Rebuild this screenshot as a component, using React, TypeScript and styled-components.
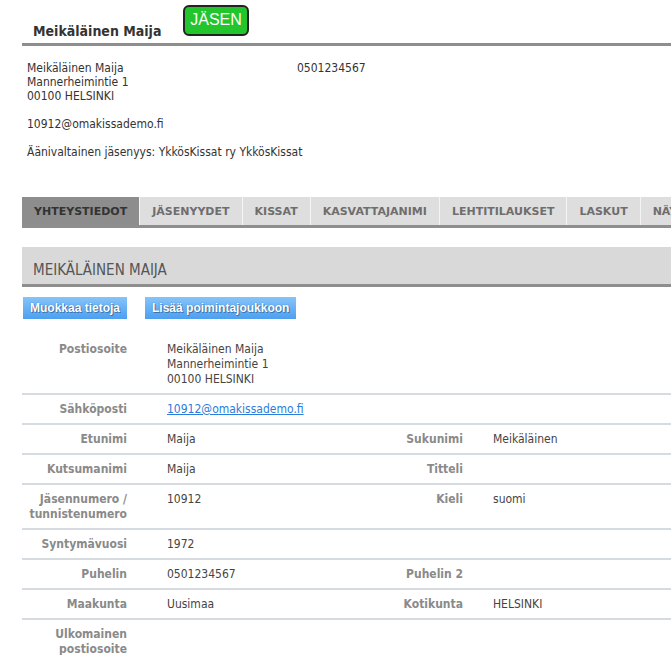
import React from "react";
import styled, { createGlobalStyle } from "styled-components";

const GlobalStyle = createGlobalStyle`
  html, body { margin: 0; padding: 0; background: #ffffff; }
  body {
    font-family: "DejaVu Sans Condensed", "DejaVu Sans", sans-serif;
    font-size: 12px;
    color: #333333;
    overflow: hidden;
  }
`;

const Page = styled.div`
  padding-left: 22px;
  width: 720px;
`;

const Header = styled.div`
  display: flex;
  align-items: flex-start;
  height: 38px;
  padding-top: 5px;
  border-bottom: 3px solid #8e8e8e;
`;

const Title = styled.h1`
  flex: 0 0 161px;
  margin: 0;
  padding: 18px 0 0 11px;
  box-sizing: border-box;
  font-size: 14px;
  font-weight: bold;
  color: #333;
  line-height: 16px;
`;

const Badge = styled.span`
  display: inline-flex;
  align-items: center;
  justify-content: center;
  width: 66px;
  height: 31px;
  box-sizing: border-box;
  padding-bottom: 2px;
  border: 2px solid #222;
  border-radius: 6px;
  background: #22c52b;
  color: #ffffff;
  font-family: "Liberation Sans", Arial, sans-serif;
  font-size: 16px;
`;

const Contact = styled.div`
  margin: 15px 0 0 5px;
  line-height: 14px;
`;

const AddressRow = styled.div`
  display: flex;
  margin-bottom: 14px;
`;

const Address = styled.div`
  flex: 0 0 270px;
`;

const Para = styled.div`
  margin-bottom: 14px;
`;

const Tabs = styled.div`
  display: flex;
  margin-top: 38px;
  height: 28px;
  border-bottom: 3px solid #8e8e8e;
  overflow: hidden;
`;

const Tab = styled.div<{ $active?: boolean }>`
  flex: 0 0 auto;
  display: flex;
  align-items: center;
  padding: 0 12px;
  background: ${(p) => (p.$active ? "#8d8d8d" : "#dedede")};
  border-right: 1px solid #f4f4f4;
  color: ${(p) => (p.$active ? "#333" : "#6e6e6e")};
  font-family: "DejaVu Sans", Verdana, sans-serif;
  font-size: 11px;
  font-weight: bold;
  white-space: nowrap;
`;

const Section = styled.div`
  margin-top: 19px;
  height: 37px;
  box-sizing: content-box;
  background: #d9d9d9;
  border-bottom: 3px solid #8e8e8e;
  display: flex;
  align-items: flex-end;
  padding-left: 11px;
`;

const SectionTitle = styled.h2`
  margin: 0 0 6px 0;
  font-size: 15px;
  font-weight: normal;
  color: #555;
  line-height: 16px;
`;

const Actions = styled.div`
  display: flex;
  gap: 18px;
  margin: 10px 0 0 1px;
`;

const Button = styled.button`
  height: 22px;
  padding: 0 7px;
  border: none;
  background: linear-gradient(#85c4fa, #4d9ff0);
  color: #fff;
  font-family: "Liberation Sans", Arial, sans-serif;
  font-size: 12px;
  font-weight: bold;
  text-shadow: 0 0 1px #2a5c8f, 1px 1px 0 rgba(30, 70, 120, 0.5);
  cursor: pointer;
`;

const Table = styled.div`
  margin-top: 16px;
`;

const Row = styled.div<{ $last?: boolean }>`
  display: grid;
  grid-template-columns: 115px 166px 170px 1fr;
  border-bottom: ${(p) => (p.$last ? "none" : "2px solid #d6dbe2")};
  line-height: 15px;
`;

const Label = styled.div`
  padding: 7px 10px 6px 0;
  text-align: right;
  font-weight: bold;
  color: #8a8a8a;
`;

const Value = styled.div<{ $indent: number }>`
  padding: 7px 0 6px ${(p) => p.$indent}px;
  color: #444;
`;

const Link = styled.a`
  color: #2b7ddc;
  text-decoration: underline;
`;

type Field = { label?: React.ReactNode; value?: React.ReactNode };

const rows: { left: Field; right?: Field }[] = [
  {
    left: {
      label: "Postiosoite",
      value: (
        <>
          Meikäläinen Maija
          <br />
          Mannerheimintie 1
          <br />
          00100 HELSINKI
        </>
      ),
    },
  },
  {
    left: {
      label: "Sähköposti",
      value: <Link href="#">10912@omakissademo.fi</Link>,
    },
  },
  { left: { label: "Etunimi", value: "Maija" }, right: { label: "Sukunimi", value: "Meikäläinen" } },
  { left: { label: "Kutsumanimi", value: "Maija" }, right: { label: "Titteli" } },
  {
    left: {
      label: (
        <>
          Jäsennumero /
          <br />
          tunnistenumero
        </>
      ),
      value: "10912",
    },
    right: { label: "Kieli", value: "suomi" },
  },
  { left: { label: "Syntymävuosi", value: "1972" } },
  { left: { label: "Puhelin", value: "0501234567" }, right: { label: "Puhelin 2" } },
  { left: { label: "Maakunta", value: "Uusimaa" }, right: { label: "Kotikunta", value: "HELSINKI" } },
  {
    left: {
      label: (
        <>
          Ulkomainen
          <br />
          postiosoite
        </>
      ),
    },
  },
];

const tabs = [
  "YHTEYSTIEDOT",
  "JÄSENYYDET",
  "KISSAT",
  "KASVATTAJANIMI",
  "LEHTITILAUKSET",
  "LASKUT",
  "NÄYTTELYT",
];

export default function App() {
  return (
    <Page>
      <GlobalStyle />
      <Header>
        <Title>Meikäläinen Maija</Title>
        <Badge>JÄSEN</Badge>
      </Header>
      <Contact>
        <AddressRow>
          <Address>
            Meikäläinen Maija
            <br />
            Mannerheimintie 1
            <br />
            00100 HELSINKI
          </Address>
          <div>0501234567</div>
        </AddressRow>
        <Para>10912@omakissademo.fi</Para>
        <div>Äänivaltainen jäsenyys: YkkösKissat ry YkkösKissat</div>
      </Contact>
      <Tabs>
        {tabs.map((t, i) => (
          <Tab key={t} $active={i === 0}>
            {t}
          </Tab>
        ))}
      </Tabs>
      <Section>
        <SectionTitle>MEIKÄLÄINEN MAIJA</SectionTitle>
      </Section>
      <Actions>
        <Button>Muokkaa tietoja</Button>
        <Button>Lisää poimintajoukkoon</Button>
      </Actions>
      <Table>
        {rows.map((r, i) => (
          <Row key={i} $last={i === rows.length - 1}>
            <Label>{r.left.label}</Label>
            <Value $indent={30}>{r.left.value}</Value>
            <Label>{r.right?.label}</Label>
            <Value $indent={20}>{r.right?.value}</Value>
          </Row>
        ))}
      </Table>
    </Page>
  );
}
